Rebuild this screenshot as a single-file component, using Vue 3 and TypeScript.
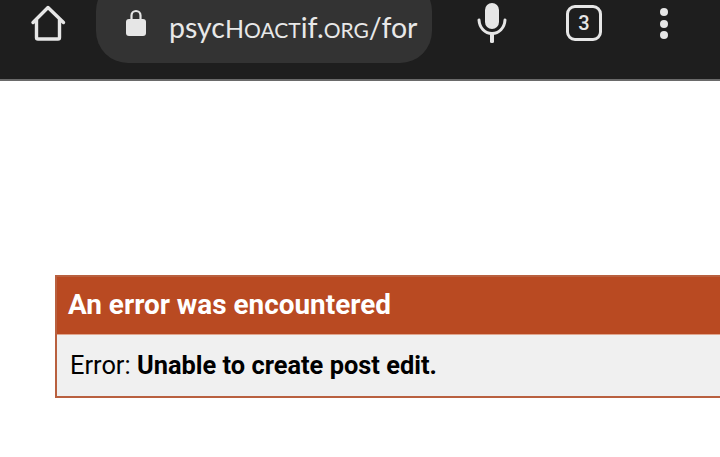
<script setup lang="ts">
const tabCount = 3
const errorTitle = 'An error was encountered'
const errorMessage = 'Unable to create post edit.'
</script>

<template>
  <div class="page">
    <header class="toolbar">
      <svg class="home" width="38" height="44" viewBox="0 0 38 44">
        <path d="M4 22.500 L19 7.500 L34.500 22.500 M7.500 19 V37.500 A1.500 1.500 0 0 0 9 39 H29 A1.500 1.500 0 0 0 30.500 37.500 V19" fill="none" stroke="#e6e6e6" stroke-width="3.400" stroke-linecap="round" stroke-linejoin="round" />
      </svg>
      <div class="url-pill">
        <svg class="lock" width="22" height="30" viewBox="0 0 22 30">
          <path d="M6.500 14 V8.500 A4.500 4.500 0 0 1 15.500 8.500 V14" fill="none" stroke="#e6e6e6" stroke-width="2.200" />
          <rect x="1" y="12" width="20" height="17" rx="3" fill="#e6e6e6" />
        </svg>
        <div class="url">
          <span>psyc</span><span class="cap">h</span><span class="small">oact</span><span>if.</span><span class="small">org</span><span>/for</span>
        </div>
      </div>
      <svg class="mic" width="30" height="42" viewBox="0 0 30 42">
        <rect x="8" y="1" width="14" height="26" rx="7" fill="#e6e6e6" />
        <path d="M2 18 C2.500 26 8 31.500 15 31.500 C22 31.500 27.500 26 28 18" fill="none" stroke="#e6e6e6" stroke-width="3" stroke-linecap="round" />
        <rect x="13" y="31" width="4" height="10" rx="1.500" fill="#e6e6e6" />
      </svg>
      <div class="tabs">{{ tabCount }}</div>
      <div class="menu"><i /><i /><i /></div>
    </header>

    <section class="error-box">
      <h2 class="error-title">{{ errorTitle }}</h2>
      <p class="error-body">Error: <strong>{{ errorMessage }}</strong></p>
    </section>
  </div>
</template>

<style>
html, body { margin: 0; background: #fff; overflow: hidden; }
</style>

<style scoped>
.page { width: 720px; height: 457px; overflow: hidden; background: #fff; font-family: Roboto, "Liberation Sans", sans-serif; }

.toolbar { display: flex; align-items: flex-start; height: 79px; background: #1e1e1e; border-bottom: 2px solid #6a6a6a; }
.home { margin: 0 0 0 29px; flex: none; }
.url-pill { display: flex; align-items: flex-start; flex: none; width: 336px; height: 84px; margin: -21px 0 0 29px; padding-top: 21px; box-sizing: border-box; border-radius: 32px; background: #333333; overflow: hidden; }
.lock { margin: 7px 0 0 29px; flex: none; }
.url { margin: 8px 0 0 22px; width: 250px; overflow: hidden; white-space: nowrap; color: #e8e8e8; font-family: "Lato", sans-serif; font-weight: 400; font-size: 28.500px; line-height: 38px; }
.url .small { font-size: 21px; text-transform: uppercase; }
.url .cap { font-size: 25px; text-transform: uppercase; }
.mic { margin: 2px 0 0 45px; flex: none; }
.tabs { flex: none; display: flex; align-items: center; justify-content: center; width: 36px; height: 36px; margin: 5px 0 0 59px; box-sizing: border-box; border: 3.500px solid #e6e6e6; border-radius: 9px; color: #e6e6e6; font-size: 20px; font-weight: 500; }
.menu { flex: none; display: flex; flex-direction: column; gap: 3.500px; margin: 8px 0 0 58px; }
.menu i { display: block; width: 8px; height: 8px; border-radius: 50%; background: #e6e6e6; }

.error-box { width: 700px; margin: 194px 0 0 55px; border: 2px solid #b9603f; background: #f0f0f0; box-sizing: border-box; }
.error-title { margin: 0; height: 57px; padding: 0 11px; background: #b94a22; color: #fff; font-size: 27.900px; font-weight: 700; line-height: 55px; }
.error-body { margin: 0; height: 62px; padding: 0 13px; color: #000; font-size: 25.400px; line-height: 61px; border-top: 1px solid #e0a68e; box-sizing: border-box; }
.error-body strong { font-weight: 700; }
</style>
